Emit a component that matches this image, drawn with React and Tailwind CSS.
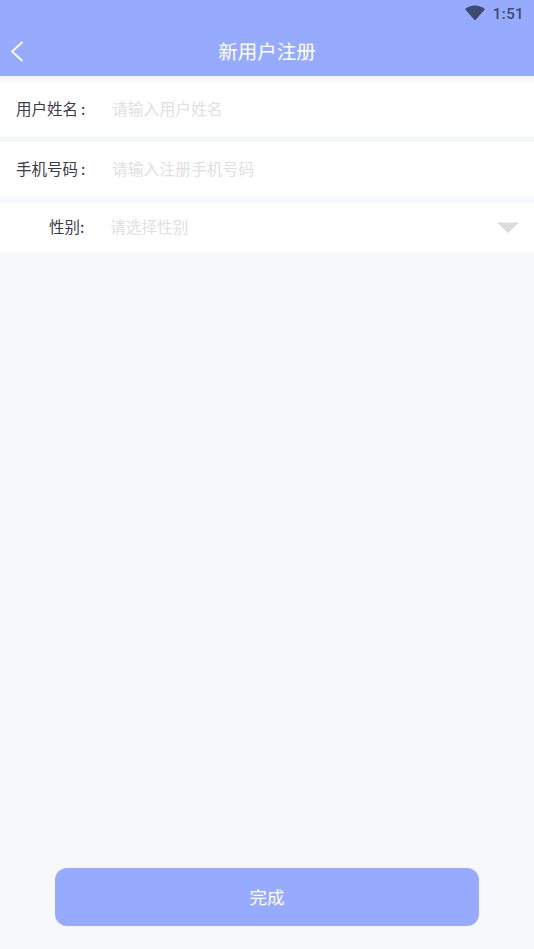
import React from "react";

const cjk = "font-['Noto_Sans_CJK_SC','Noto_Sans',sans-serif]";

const App = () => {
    return (
        <div className={`w-[534px] h-[949px] flex flex-col bg-[#f7f8fc] overflow-hidden ${cjk}`}>
            {/* header with status bar */}
            <div className="h-[76px] shrink-0 bg-[#97abfe] flex flex-col">
                <div className="h-[28px] flex items-center justify-end pr-[10px] gap-[8px]">
                    <svg width="20" height="16" viewBox="0 0 20 16" className="mt-[-2px]">
                        <path d="M0 4.2 C5.6 -0.6 14.4 -0.6 20 4.2 L10 15.6 Z" fill="#3e4a6e" />
                    </svg>
                    <span className="font-['Roboto',sans-serif] text-[15px] font-medium leading-none text-[#3e4a6e] tracking-[0.4px]">1:51</span>
                </div>
                <div className="relative flex-1 flex items-center justify-center pb-[2px]">
                    <svg width="14" height="22" viewBox="0 0 14 22" className="absolute left-[10px] top-[13px]" fill="none">
                        <path d="M12.5 1 L2 10.5 L12.5 20" stroke="#ffffff" strokeWidth="1.7" />
                    </svg>
                    <span className="text-[19.5px] leading-none text-white">新用户注册</span>
                </div>
            </div>

            {/* form rows */}
            <div className="mt-[6px] flex flex-col gap-[6px]">
                <div className="h-[54px] bg-white flex items-center pl-[16px]">
                    <span className="w-[96px] text-[15.5px] text-[#3a3d48]">用户姓名<span className="ml-[3px]">:</span></span>
                    <span className="text-[15.8px] text-[#e0e0e2]">请输入用户姓名</span>
                </div>
                <div className="h-[54px] bg-white flex items-center pl-[16px]">
                    <span className="w-[96px] text-[15.5px] text-[#3a3d48]">手机号码<span className="ml-[3px]">:</span></span>
                    <span className="text-[15.8px] text-[#e0e0e2]">请输入注册手机号码</span>
                </div>
                <div className="h-[50px] bg-white flex items-center pl-[49px] pr-[14px]">
                    <span className="w-[61px] text-[15.5px] text-[#3a3d48]">性别:</span>
                    <span className="flex-1 text-[15.7px] text-[#e0e0e2]">请选择性别</span>
                    <svg width="24" height="13" viewBox="0 0 24 13">
                        <path d="M1 1.5 L23 1.5 L12 12 Z" fill="#dcdcdc" />
                    </svg>
                </div>
            </div>

            {/* submit */}
            <div className="mt-auto pb-[23px] px-[55px]">
                <button className={`w-full h-[58px] rounded-[12px] bg-[#97abfe] text-white text-[17.5px] ${cjk}`}>
                    完成
                </button>
            </div>
        </div>
    );
};

export default App;
